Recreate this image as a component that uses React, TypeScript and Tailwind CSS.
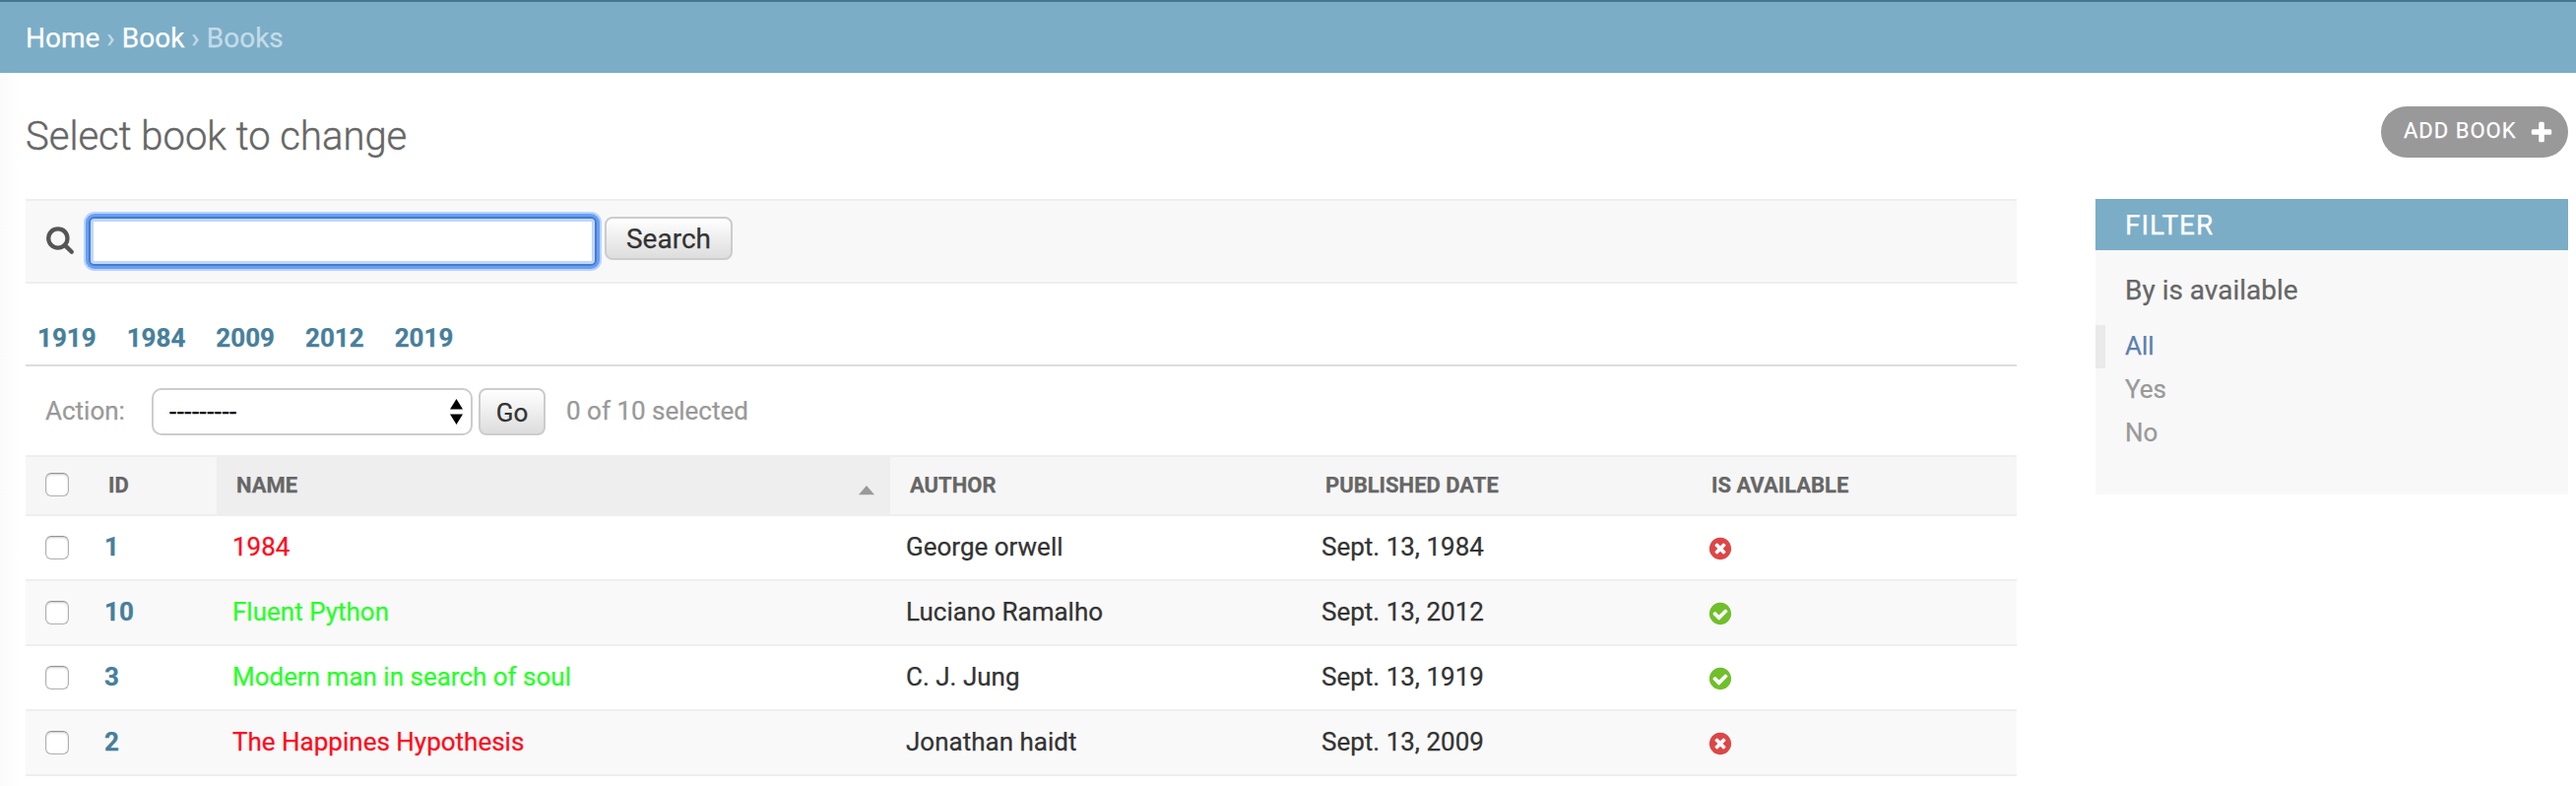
import type { ReactNode } from "react";

const YES_PATH =
  "M1412 734q0-28-18-46l-91-90q-19-19-45-19t-45 19l-408 407-226-226q-19-19-45-19t-45 19l-91 90q-18 18-18 46 0 27 18 45l362 362q19 19 45 19 27 0 46-19l543-543q18-18 18-45zm252 162q0 209-103 385.5t-279.5 279.5-385.5 103-385.5-103-279.5-279.5-103-385.5 103-385.5 279.5-279.5 385.5-103 385.5 103 279.5 279.5 103 385.5z";
const NO_PATH =
  "M1277 1122q0-26-19-45l-181-181 181-181q19-19 19-45 0-27-19-46l-90-90q-19-18-46-18-26 0-45 18l-181 181-181-181q-19-18-45-18-27 0-46 18l-90 90q-19 19-19 46 0 26 19 45l181 181-181 181q-19 19-19 45 0 27 19 46l90 90q19 18 46 18 26 0 45-18l181-181 181 181q19 18 45 18 27 0 46-18l90-90q19-19 19-46zm387-226q0 209-103 385.5t-279.5 279.5-385.5 103-385.5-103-279.5-279.5-103-385.5 103-385.5 279.5-279.5 385.5-103 385.5 103 279.5 279.5 103 385.5z";
const SEARCH_PATH =
  "M1216 832q0-185-131.5-316.5t-316.5-131.5-316.5 131.5-131.5 316.5 131.5 316.5 316.5 131.5 316.5-131.5 131.5-316.5zm512 832q0 52-38 90t-90 38q-54 0-90-38l-343-342q-179 124-399 124-143 0-273.5-55.5t-225-150-150-225-55.5-273.5 55.5-273.5 150-225 225-150 273.5-55.5 273.5 55.5 225 150 150 225 55.5 273.5q0 220-124 399l343 343q37 37 37 90z";
const PLUS_PATH =
  "M1600 736v192q0 40-28 68t-68 28h-416v416q0 40-28 68t-68 28h-192q-40 0-68-28t-28-68v-416h-416q-40 0-68-28t-28-68v-192q0-40 28-68t68-28h416v-416q0-40 28-68t68-28h192q40 0 68 28t28 68v416h416q40 0 68 28t28 68z";

function Glyph({ d, className }: { d: string; className: string }) {
  return (
    <svg viewBox="0 0 1792 1792" className={className} fill="currentColor" aria-hidden="true">
      <path d={d} />
    </svg>
  );
}

function Checkbox() {
  return (
    <input
      type="checkbox"
      className="block size-6 shrink-0 appearance-none rounded-[6px] border border-[#b0b0b0] border-t-[#949494] bg-white shadow-[inset_0_1px_2px_rgba(0,0,0,0.22)]"
    />
  );
}

function Button({ children, className }: { children: ReactNode; className: string }) {
  return (
    <button
      className={`shrink-0 border-2 border-[#ccc] bg-linear-to-b from-white to-[#ddd] text-center text-[#333] ${className}`}
    >
      {children}
    </button>
  );
}

const GRID = "grid grid-cols-[64px_130px_684px_422px_392px_1fr]";

const books = [
  { id: 1, name: "1984", author: "George orwell", date: "Sept. 13, 1984", available: false },
  { id: 10, name: "Fluent Python", author: "Luciano Ramalho", date: "Sept. 13, 2012", available: true },
  { id: 3, name: "Modern man in search of soul", author: "C. J. Jung", date: "Sept. 13, 1919", available: true },
  { id: 2, name: "The Happines Hypothesis", author: "Jonathan haidt", date: "Sept. 13, 2009", available: false },
];

export default function App() {
  return (
    <div className="h-[798px] w-[2616px] overflow-hidden bg-white bg-linear-to-r from-[#fbfbfb] to-white to-[22px] font-['Roboto',sans-serif] text-[26px] text-[#333] [-webkit-text-stroke:0.25px]">
      <nav className="flex h-[74px] items-center gap-[7px] border-t-2 border-[#44768f] bg-[#7badc7] pt-[2px] pl-[26px] text-[28px] leading-[36px] text-[#c4dce8]">
        <a className="text-white">Home</a>
        <span>›</span>
        <a className="text-white">Book</a>
        <span>›</span>
        <span>Books</span>
      </nav>

      <header className="flex h-[128px] items-start justify-between pr-2 pl-[26px]">
        <h1 className="text-[40px] leading-[130px] font-light text-[#666] [-webkit-text-stroke:0.4px]">Select book to change</h1>
        <a className="mt-[34px] flex h-[52px] w-[190px] items-start justify-between rounded-full bg-[#999] pr-[14px] pl-[23px] text-[22px] leading-[49px] tracking-[1px] text-white">
          ADD BOOK
          <Glyph d={PLUS_PATH} className="mt-[14px] size-[26px]" />
        </a>
      </header>

      <div className="flex items-start justify-between pr-2 pl-[26px]">
        <main className="w-[2022px]">
          <form className="flex h-[86px] items-start border-y-2 border-[#eee] bg-[#f8f8f8] pl-5">
            <Glyph d={SEARCH_PATH} className="mt-6 size-[30px] text-[#555]" />
            <input
              type="text"
              className="mt-4 ml-[14px] h-[50px] w-[516px] rounded-[6px] border-2 border-[#447bcf] bg-white shadow-[0_0_0_3px_#679ff5,0_0_0_5px_#b9d3f9,inset_0_0_0_3px_#bfd7fb] outline-none"
            />
            <Button className="mt-4 ml-2 h-11 w-[130px] rounded-[8px] pt-px text-[28px] leading-[39px]">Search</Button>
          </form>

          <div className="flex h-[84px] gap-[31px] border-b-2 border-[#ddd] pt-[37px] pl-3 leading-[36px] font-bold text-[#477f9b]">
            <a>1919</a>
            <a>1984</a>
            <a>2009</a>
            <a>2012</a>
            <a>2019</a>
          </div>

          <div className="flex h-[90px] items-center pl-5 text-[#999]">
            <span className="w-[108px]">Action:</span>
            <div className="mt-[2px] flex h-12 w-[326px] items-center justify-between rounded-[10px] border-2 border-[#ccc] bg-white pr-2 pl-4 text-black">
              <span className="tracking-[0.45px]">---------</span>
              <svg viewBox="0 0 13 26" className="h-[26px] w-[13px]" aria-hidden="true">
                <path d="M6.5 0 13 10.5H0zM6.5 26 0 15.5h13z" />
              </svg>
            </div>
            <Button className="mt-[2px] ml-[6px] h-12 w-[68px] rounded-[8px] leading-[46px]">Go</Button>
            <span className="ml-[21px]">0 of 10 selected</span>
          </div>

          <div className={`${GRID} h-[62px] border-y-2 border-[#eee] bg-[#f6f6f6] text-[22px] leading-[57px] font-bold text-[#666]`}>
            <div className="pt-4 pl-5">
              <Checkbox />
            </div>
            <div className="pl-5">ID</div>
            <div className="flex justify-between bg-[#eee] pr-4 pl-5">
              NAME
              <svg viewBox="0 0 16 10" className="mt-[29px] h-[10px] w-4 text-[#999]" fill="currentColor" aria-hidden="true">
                <path d="M8 0l8 9.3H0z" />
              </svg>
            </div>
            <div className="pl-5">AUTHOR</div>
            <div className="pl-5">PUBLISHED DATE</div>
            <div className="pl-5">IS AVAILABLE</div>
          </div>

          {books.map((book) => (
            <div
              key={book.id}
              className={`${GRID} h-[66px] border-b-2 border-[#eee] leading-[62px] odd:bg-white even:bg-[#f9f9f9]`}
            >
              <div className="pt-5 pl-5">
                <Checkbox />
              </div>
              <div className="pl-4 font-bold text-[#477f9b]">{book.id}</div>
              <div className={book.available ? "pl-4 text-[#29ff29]" : "pl-4 text-[#ff0a1b]"}>{book.name}</div>
              <div className="pl-4">{book.author}</div>
              <div className="pl-4">{book.date}</div>
              <div className="pt-5 pl-4">
                {book.available ? (
                  <Glyph d={YES_PATH} className="size-[26px] text-[#70bf2b]" />
                ) : (
                  <Glyph d={NO_PATH} className="size-[26px] text-[#dd4646]" />
                )}
              </div>
            </div>
          ))}
        </main>

        <aside className="h-[300px] w-[480px] bg-[#f8f8f8]">
          <h2 className="h-[52px] bg-[#7badc7] pl-[30px] text-[28px] leading-[53px] tracking-[1px] text-white">FILTER</h2>
          <h3 className="h-[76px] pt-[23px] pl-[30px] text-[28px] leading-[36px] text-[#666]">By is available</h3>
          <ul className="leading-[42px] text-[#999]">
            <li className="h-11 border-l-[10px] border-[#eaeaea] pl-5 text-[#5b80b2]">All</li>
            <li className="h-11 pl-[30px]">Yes</li>
            <li className="h-11 pl-[30px]">No</li>
          </ul>
        </aside>
      </div>
    </div>
  );
}
